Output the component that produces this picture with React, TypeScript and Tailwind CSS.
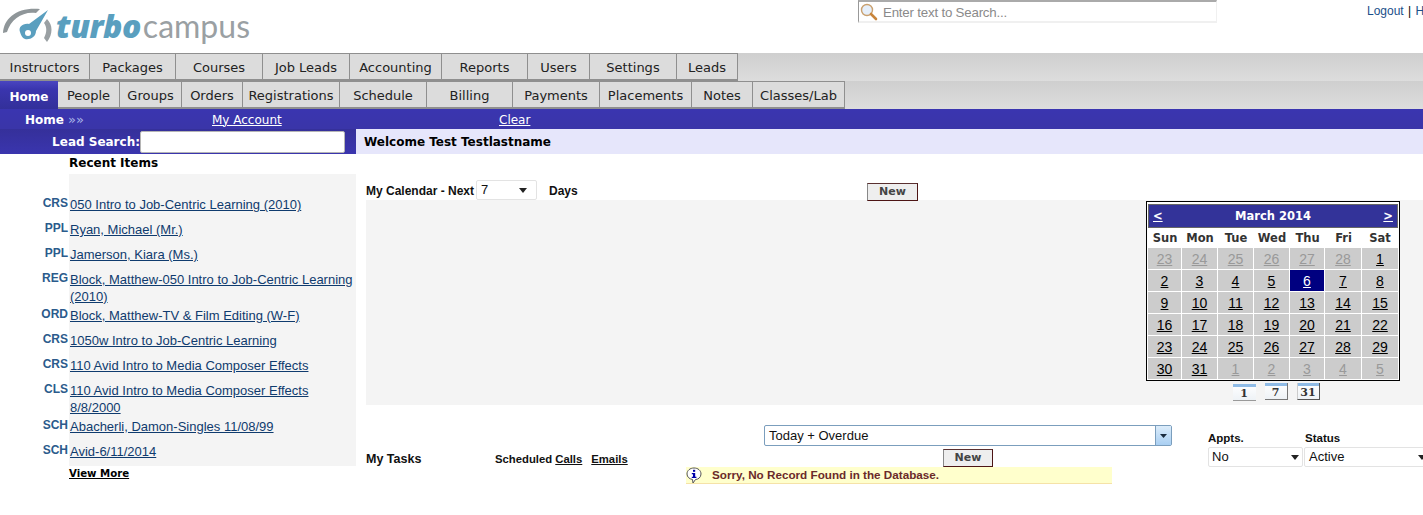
import React from "react";

const verdana = "font-['DejaVu_Sans',Verdana,sans-serif]";

const row1 = [
  ["Instructors", "w-[90px]"],
  ["Packages", "w-[86px]"],
  ["Courses", "w-[87px]"],
  ["Job Leads", "w-[87px]"],
  ["Accounting", "w-[92px]"],
  ["Reports", "w-[86px]"],
  ["Users", "w-[62px]"],
  ["Settings", "w-[87px]"],
  ["Leads", "w-[61px]"],
];
const row2 = [
  ["People", "w-[62px]"],
  ["Groups", "w-[62px]"],
  ["Orders", "w-[61px]"],
  ["Registrations", "w-[97px]"],
  ["Schedule", "w-[87px]"],
  ["Billing", "w-[86px]"],
  ["Payments", "w-[87px]"],
  ["Placements", "w-[92px]"],
  ["Notes", "w-[61px]"],
  ["Classes/Lab", "w-[92px]"],
];

const recent = [
  ["CRS", "050 Intro to Job-Centric Learning (2010)", "h-[25px]"],
  ["PPL", "Ryan, Michael (Mr.)", "h-[25px]"],
  ["PPL", "Jamerson, Kiara (Ms.)", "h-[25px]"],
  ["REG", "Block, Matthew-050 Intro to Job-Centric Learning (2010)", "h-[36px]"],
  ["ORD", "Block, Matthew-TV & Film Editing (W-F)", "h-[25px]"],
  ["CRS", "1050w Intro to Job-Centric Learning", "h-[25px]"],
  ["CRS", "110 Avid Intro to Media Composer Effects", "h-[25px]"],
  ["CLS", "110 Avid Intro to Media Composer Effects 8/8/2000", "h-[36px]"],
  ["SCH", "Abacherli, Damon-Singles 11/08/99", "h-[25px]"],
  ["SCH", "Avid-6/11/2014", "h-[23px]"],
];

const calDays: [string, boolean][] = [
  ...["23", "24", "25", "26", "27", "28"].map((d) => [d, true] as [string, boolean]),
  ...Array.from({ length: 31 }, (_, i) => [String(i + 1), false] as [string, boolean]),
  ...["1", "2", "3", "4", "5"].map((d) => [d, true] as [string, boolean]),
];

function Logo() {
  return (
    <div className="flex items-start pl-[3px] pt-[7px]">
      <svg width="50" height="36" viewBox="0 0 50 36" className="shrink-0">
        <path d="M0 26 C1 11 14 0 37 2 L33 6 C20 4 8 12 4 25 Z" fill="#8f9699" />
        <path d="M44 12 C50 18 50 27 44 35 L41 31 C44 25 44 20 41 16 Z" fill="#9aa0a3" />
        <path d="M17 25 C15 20 20 16 26 17 L45 3 L33 24 C33 30 27 33 22 32 C19 31 18 28 17 25 Z" fill="#5a9fbf" />
        <circle cx="25" cy="26" r="3" fill="#ffffff" />
      </svg>
      <span className="ml-[3px] mt-[-1px] text-[32px] leading-[40px] font-extrabold italic text-[#5a9fbf] font-['Open_Sans',sans-serif] tracking-[-0.5px]">
        turbo
      </span>
      <span className="ml-[2px] mt-[-1px] text-[32px] leading-[40px] text-[#9aa0a3] font-['Lato',sans-serif]">
        campus
      </span>
    </div>
  );
}

function Magnifier() {
  return (
    <svg width="18" height="18" viewBox="0 0 18 18" className="shrink-0">
      <circle cx="7" cy="7" r="5.5" fill="#e6effa" stroke="#c9a06f" strokeWidth="1.4" />
      <path d="M11 11 L16 16" stroke="#c8853c" strokeWidth="2.6" strokeLinecap="round" />
    </svg>
  );
}

function InfoIcon() {
  return (
    <svg width="16" height="17" viewBox="0 0 16 17" className="shrink-0">
      <path d="M8 1 C12 1 15 3.5 15 7 C15 10.5 12 12.5 9.5 12.5 L7 16 L6.5 12.5 C3.5 12 1 10 1 7 C1 3.5 4 1 8 1 Z" fill="#ffffff" stroke="#555" strokeWidth="1" />
      <rect x="7" y="2.8" width="2.2" height="2" fill="#0000aa" />
      <path d="M5.8 6 H9.2 V9.8 H10.4 V11 H5.8 V9.8 H7 V7.2 H5.8 Z" fill="#0000aa" />
    </svg>
  );
}

function FakeSelect({ value, className, caretClass }: { value: string; className: string; caretClass: string }) {
  return (
    <div className={"flex items-center bg-white border border-[#e3e3e3] rounded-[2px] text-[13px] text-[#111] " + className}>
      <span className="flex-1 whitespace-nowrap">{value}</span>
      <svg width="8" height="5" viewBox="0 0 8 5" className={"shrink-0 " + caretClass}>
        <path d="M0 0 H8 L4 5 Z" fill="#222" />
      </svg>
    </div>
  );
}

function NewButton({ className }: { className: string }) {
  return (
    <div className={"flex items-center justify-center bg-[#eeeeee] border border-[#4d1515] border-l-[#888] border-t-[#5a3030] pt-[1px] text-[11px] font-bold text-[#444] h-[18px] " + verdana + " " + className}>
      New
    </div>
  );
}

function CalIcon({ label, className }: { label: string; className: string }) {
  return (
    <div className={"flex flex-col w-[23px] h-[17px] bg-[linear-gradient(#ffffff,#eef2f6)] " + className}>
      <div className="h-[3px] bg-[#8fbbe6]" />
      <div className="flex-1 flex items-center justify-center text-[11px] leading-none font-bold text-[#333] font-['DejaVu_Serif',serif]">
        {label}
      </div>
    </div>
  );
}

function Calendar() {
  return (
    <div className="w-[254px]">
      <div className="border border-black bg-white p-[1px] pt-[2px]">
        <div className={"flex items-center justify-between h-[24px] pt-[1px] bg-[#333399] border border-[#666] px-[4px] text-white text-[11.5px] font-bold " + verdana}>
          <a className="underline">&lt;</a>
          <span>March 2014</span>
          <a className="underline">&gt;</a>
        </div>
        <div className={"grid grid-cols-[34px_36px_36px_36px_35px_37px_36px] h-[20px] pt-[1px] items-center text-center text-[11.5px] font-bold text-[#333] " + verdana}>
          {["Sun", "Mon", "Tue", "Wed", "Thu", "Fri", "Sat"].map((d) => (
            <div key={d}>{d}</div>
          ))}
        </div>
        <div className="grid grid-cols-[33px_35px_35px_35px_34px_36px_36px] gap-[1px] auto-rows-[21px] text-center text-[14px] leading-[23px]">
          {calDays.map(([d, muted], i) => (
            <div
              key={i}
              className={
                d === "6" && !muted
                  ? "bg-[#000080] text-white underline"
                  : muted
                    ? "bg-[#cccccc] text-[#999999] underline"
                    : "bg-[#cccccc] text-black underline"
              }
            >
              {d}
            </div>
          ))}
        </div>
      </div>
      <div className="flex justify-center gap-[9px] mt-[2px] pl-[6px]">
        <CalIcon label="1" className="border-b border-[#999] mt-[1px]" />
        <CalIcon label="7" className="border-b border-r border-[#777]" />
        <CalIcon label="31" className="border-b border-r border-[#555] border-l border-l-[#ccc]" />
      </div>
    </div>
  );
}

export default function App() {
  return (
    <div className="w-[1423px] h-[515px] overflow-hidden bg-white font-['Liberation_Sans',Arial,sans-serif] text-black">
      {/* Header */}
      <div className="flex h-[53px]">
        <div className="w-[858px] shrink-0">
          <Logo />
        </div>
        <div className="w-[359px] h-[23px] shrink-0 flex items-center gap-[5px] pl-[1px] border-t-2 border-l border-t-[#aaaaaa] border-l-[#999999] border-r border-b-2 border-r-[#f0f0f0] border-b-[#f0f0f0]">
          <Magnifier />
          <span className="text-[13.3px] tracking-[-0.2px] text-[#8a8a8a] pt-[2px]">Enter text to Search...</span>
        </div>
        <div className="ml-[150px] pt-[4px] text-[12px] leading-[14px] whitespace-nowrap text-[#1a4f8a]">
          Logout <span className="text-black mx-[1px]">|</span> Help
        </div>
      </div>

      {/* Tabs */}
      <div className={"flex h-[28px] bg-[linear-gradient(#cfcfcf,#dddddd)] text-[13px] text-[#222] " + verdana}>
        {row1.map(([t, w]) => (
          <div key={t} className={"h-[28px] flex items-center justify-center pt-[2px] border-t border-b-2 border-r border-[#8f8f8f] bg-[#dcdcdc] " + w}>
            {t}
          </div>
        ))}
      </div>
      <div className={"flex h-[28px] bg-[linear-gradient(#cfcfcf,#dddddd)] text-[13px] text-[#222] " + verdana}>
        <div className="w-[58px] h-[28px] flex items-center justify-center pt-[3px] text-[12px] font-bold text-white bg-[linear-gradient(#4a45c0,#3a35ae_30%,#33309a)]">
          Home
        </div>
        {row2.map(([t, w]) => (
          <div key={t} className={"h-[28px] flex items-center justify-center pt-[2px] border-t border-b-2 border-r border-[#8f8f8f] bg-[#dcdcdc] " + w}>
            {t}
          </div>
        ))}
      </div>

      {/* Breadcrumb bar */}
      <div className={"flex items-center h-[20px] pt-[1px] bg-[linear-gradient(#3a35b0,#3a35a8)] text-white text-[12px] " + verdana}>
        <span className="ml-[25px] w-[187px] font-bold">
          Home <span className="text-[#a9b4e8] font-normal text-[13px]">»»</span>
        </span>
        <a className="underline w-[287px]">My Account</a>
        <a className="underline">Clear</a>
      </div>

      {/* Search + welcome */}
      <div className="flex h-[25px]">
        <div className={"w-[356px] flex items-center justify-end pr-[11px] bg-[linear-gradient(#35309a,#3a35ae)] text-white text-[12px] font-bold " + verdana}>
          <span>Lead Search:</span>
          <div className="w-[205px] h-[22px] bg-white border border-[#b5b5b5] rounded-[2px]" />
        </div>
        <div className={"flex-1 flex items-center pl-[8px] bg-[#e6e6fb] text-[12px] font-bold text-black " + verdana}>
          Welcome Test Testlastname
        </div>
      </div>

      {/* Main */}
      <div className="flex">
        {/* Sidebar */}
        <div className="w-[356px] shrink-0">
          <div className={"pl-[69px] h-[18px] mb-[2px] flex items-center text-[12px] font-bold " + verdana}>Recent Items</div>
          <div className="ml-[69px] h-[22px] bg-[#f4f4f4]" />
          {recent.map(([tag, text, h], i) => (
            <div key={i} className={"flex " + h}>
              <div className="w-[69px] shrink-0 pr-[1px] text-right text-[12px] leading-[14px] font-bold text-[#2b5b8c]">
                {tag}
              </div>
              <div className="flex-1 bg-[#f4f4f4] pl-[1px] pr-[1px] text-[13px] leading-[17px] text-[#0f3b6e] underline">
                {text}
              </div>
            </div>
          ))}
          <div className="pl-[69px] pt-[1px] text-[10.2px] leading-[13px] font-bold underline">
            <span className={verdana}>View More</span>
          </div>
        </div>

        {/* Content */}
        <div className="flex-1 pl-[10px] pt-[26px] min-w-0">
          <div className="flex items-center h-[20px] text-[12px] font-bold text-[#111]">
            <span className="w-[110px] pt-[2px]">My Calendar - Next</span>
            <FakeSelect value="7" className="w-[61px] h-[20px] pl-[4px] font-normal" caretClass="mr-[9px]" />
            <span className="ml-[12px] w-[318px] pt-[2px]">Days</span>
            <NewButton className="w-[51px] mt-[3px]" />
          </div>
          <div className="flex justify-end bg-[#f4f4f4] h-[205px] pt-[1px] pr-[23px]">
            <Calendar />
          </div>

          {/* Tasks */}
          <div className="flex">
            <div className="w-[842px] shrink-0">
              <div className="pl-[398px] pt-[20px]">
                <div className="flex items-center w-[408px] h-[21px] pl-[4px] border border-[#7b9ebd] rounded-[2px] text-[13px] text-[#111]">
                  <span className="flex-1 pt-[1px]">Today + Overdue</span>
                  <div className="w-[16px] h-[19px] flex items-center justify-center bg-[linear-gradient(#dcecfa,#a9cff2)] border-l border-[#7b9ebd]">
                    <svg width="7" height="4" viewBox="0 0 7 4">
                      <path d="M0 0 H7 L3.5 4 Z" fill="#1b2c3e" />
                    </svg>
                  </div>
                </div>
              </div>
              <div className="flex items-end h-[18px] mt-[3px] font-bold text-[#111]">
                <span className="w-[129px] text-[12.5px] leading-[16px]">My Tasks</span>
                <span className="w-[448px] text-[11.3px] leading-[14px] mb-[1px] whitespace-nowrap">
                  Scheduled <a className="underline">Calls</a>
                  <a className="underline ml-[9px]">Emails</a>
                </span>
                <NewButton className="w-[50px]" />
              </div>
              <div className="ml-[320px] w-[426px] h-[17px] flex items-center bg-[#ffffcc] border-b border-[#f5e2a8] text-[11.7px] font-bold text-[#6b2a2a]">
                <InfoIcon />
                <span className="ml-[10px]">Sorry, No Record Found in the Database.</span>
              </div>
            </div>
            <div className="flex-1 pt-[26px] flex gap-[1px] text-[11.5px] font-bold text-[#111] min-w-0">
              <div className="w-[95px] shrink-0">
                <div className="h-[16px] leading-[14px]">Appts.</div>
                <FakeSelect value="No" className="w-[95px] h-[20px] pl-[3px] font-normal" caretClass="mr-[3px]" />
              </div>
              <div className="w-[122px] shrink-0">
                <div className="h-[16px] leading-[14px] pl-[1px]">Status</div>
                <FakeSelect value="Active" className="w-[122px] h-[20px] pl-[4px] font-normal" caretClass="mr-[-1px]" />
              </div>
            </div>
          </div>
        </div>
      </div>
    </div>
  );
}
